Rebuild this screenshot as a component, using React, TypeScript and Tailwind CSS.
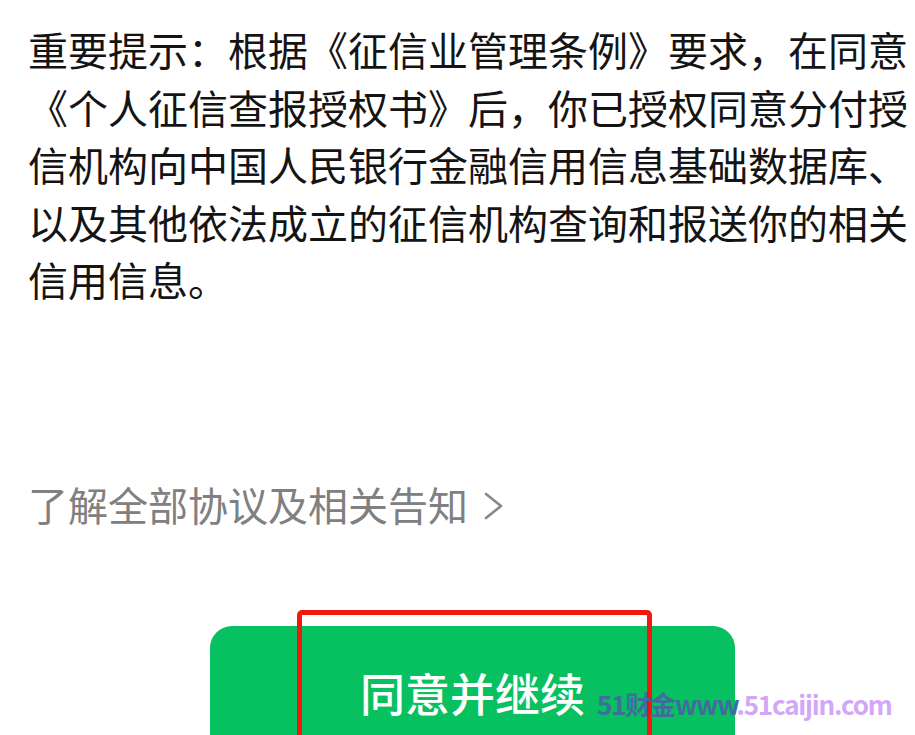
import React from "react";

export default function App() {
  const lines = [
    "重要提示：根据《征信业管理条例》要求，在同意",
    "《个人征信查报授权书》后，你已授权同意分付授",
    "信机构向中国人民银行金融信用信息基础数据库、",
    "以及其他依法成立的征信机构查询和报送你的相关",
    "信用信息。",
  ];
  return (
    <div
      className="relative w-[915px] h-[735px] overflow-hidden bg-white"
      style={{ fontFamily: '"Noto Sans CJK SC", "Noto Sans", sans-serif' }}
    >
      <div className="pt-[21px] pl-[28px] text-[40px] leading-[57.5px] text-[#141414] whitespace-nowrap">
        {lines.map((l, i) => (
          <div key={i}>{l}</div>
        ))}
      </div>

      <div className="mt-[167.5px] pl-[28px] flex items-center h-[57.5px] text-[40px] leading-[57.5px] text-[#808080] whitespace-nowrap">
        <span>了解全部协议及相关告知</span>
        <svg width="22" height="30" viewBox="0 0 22 30" className="ml-[14px] mt-[2px]">
          <polyline points="4,3 19,15 4,27" fill="none" stroke="#888888" strokeWidth="2.6" strokeLinecap="round" strokeLinejoin="round" />
        </svg>
      </div>

      <div className="relative mt-[92.5px] ml-[210px] w-[525px]">
        <div className="h-[132px] rounded-[22px] bg-[#07c160] flex items-center justify-center text-white text-[45px] font-medium leading-none">
          同意并继续
        </div>
        <div className="absolute left-[87px] top-[-16px] w-[355px] h-[220px] border-[5px] border-[#f2180f] rounded-[5px]" />
      </div>

      <div
        className="absolute left-[597px] top-[687px] text-[26px] font-bold leading-[34px] whitespace-nowrap tracking-[-1.2px]"
        style={{ fontFamily: '"Noto Sans CJK SC", sans-serif' }}
      >
        <span className="text-[#3f6e9e]">51财金www</span>
        <span className="text-[#d3a7f7]">.51caijin.com</span>
      </div>
    </div>
  );
}
